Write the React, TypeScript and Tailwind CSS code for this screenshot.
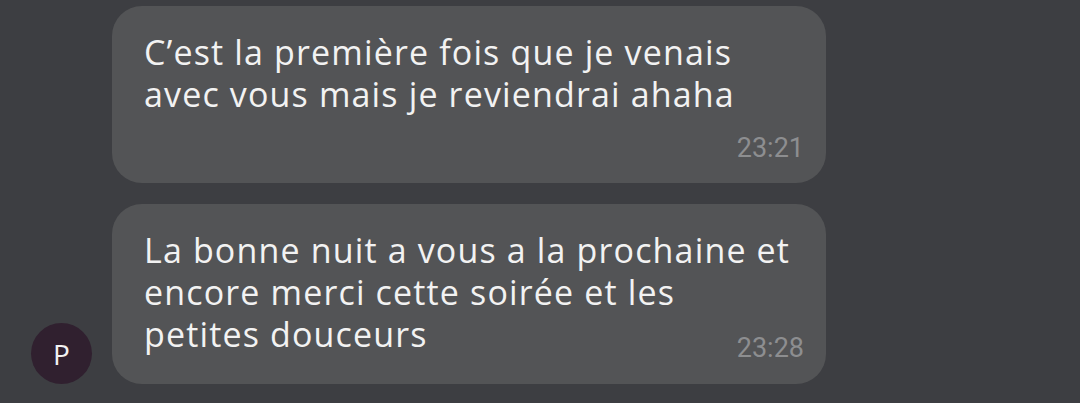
import React from "react";

export default function App() {
  const font = { fontFamily: "'Open Sans', sans-serif" };
  return (
    <div className="w-[1080px] h-[403px] bg-[#3d3e42] overflow-hidden">
      <div className="flex flex-col gap-[21px] pt-[6px]">
        <div className="flex items-end">
          <div className="w-[112px] shrink-0" />
          <div className="w-[714px] rounded-[30px] bg-[#535456] pl-[32px] pr-[22px] pt-[25px] pb-[20px]">
            <div className="text-[34px] leading-[42px] tracking-[1.15px] text-[#f2f2f2]" style={font}>
              <div>C’est la première fois que je venais</div>
              <div>avec vous mais je reviendrai ahaha</div>
            </div>
            <div className="flex justify-end mt-[18px]">
              <span className="text-[27px] leading-[30px] text-[#8d8e90] font-['Roboto',sans-serif]">23:21</span>
            </div>
          </div>
        </div>
        <div className="flex items-end">
          <div className="w-[112px] shrink-0 flex justify-start pl-[31px]">
            <div className="w-[61px] h-[61px] rounded-full bg-[#30202f] flex items-center justify-center text-[#f2f2f2] text-[28px] font-['Open_Sans',sans-serif]">P</div>
          </div>
          <div className="w-[714px] rounded-[30px] bg-[#535456] pl-[32px] pr-[22px] pt-[25px] pb-[29px]">
            <div className="text-[34px] leading-[42px] tracking-[1.15px] text-[#f2f2f2]" style={font}>
              <div>La bonne nuit a vous a la prochaine et</div>
              <div>encore merci cette soirée et les</div>
              <div className="flex justify-between items-end">
                <span>petites douceurs</span>
                <span className="text-[27px] leading-[30px] tracking-normal text-[#8d8e90] font-['Roboto',sans-serif] -mb-[8px]">23:28</span>
              </div>
            </div>
          </div>
        </div>
      </div>
    </div>
  );
}
